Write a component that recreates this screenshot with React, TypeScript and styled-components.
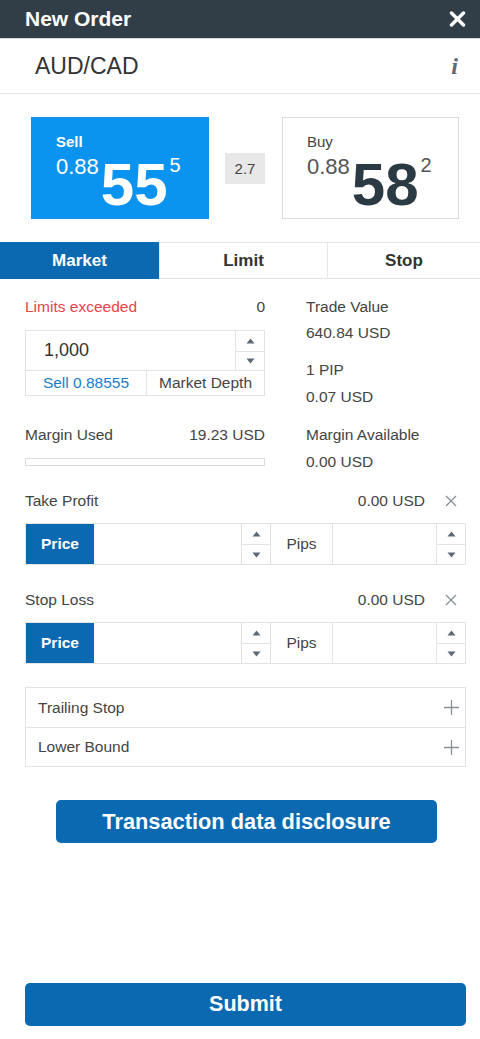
import React from "react";
import styled, { createGlobalStyle } from "styled-components";

const Global = createGlobalStyle`
  html, body { margin: 0; padding: 0; background: #fff; }
  body { font-family: "Liberation Sans", Arial, sans-serif; color: #444; }
  * { box-sizing: border-box; }
`;

const Page = styled.div`
  display: flex;
  flex-direction: column;
  min-height: 1039px;
  width: 480px;
`;

const Header = styled.div`
  height: 38px;
  background: #323e47;
  display: flex;
  align-items: center;
  justify-content: space-between;
  padding: 0 14px 0 25px;
  color: #fff;
  font-weight: bold;
  font-size: 21px;
`;

const SymbolRow = styled.div`
  height: 56px;
  display: flex;
  align-items: center;
  justify-content: space-between;
  padding: 0 20px 0 35px;
  border-bottom: 1px solid #e6e6e6;
  border-top: 1px solid #d7dadc;
`;

const Symbol = styled.div`
  font-size: 23px;
  color: #333;
  font-weight: 500;
`;

const Info = styled.span`
  font-family: "Liberation Serif", "DejaVu Serif", serif;
  font-style: italic;
  font-weight: bold;
  font-size: 24px;
  color: #5f6a74;
  padding-right: 2px;
`;

const Quotes = styled.div`
  display: flex;
  align-items: center;
  padding: 23px 0 0 31px;
`;

const QuoteBox = styled.div<{ $active?: boolean }>`
  width: ${(p) => (p.$active ? 178 : 177)}px;
  height: 102px;
  background: ${(p) => (p.$active ? "#0b93f0" : "#fff")};
  border: 1px solid ${(p) => (p.$active ? "#0b93f0" : "#dcdcdc")};
  color: ${(p) => (p.$active ? "#fff" : "#2c3a44")};
  padding: 16px 0 0 24px;
`;

const QuoteLabel = styled.div<{ $active?: boolean }>`
  font-size: 15px;
  line-height: 16px;
  color: ${(p) => (p.$active ? "#fff" : "#444")};
  font-weight: ${(p) => (p.$active ? "bold" : "normal")};
`;

const PriceRow = styled.div`
  display: flex;
  align-items: flex-start;
  margin-top: 6px;
`;

const PriceSmall = styled.span<{ $active?: boolean }>`
  font-size: 22px;
  line-height: 21px;
  color: ${(p) => (p.$active ? "#fff" : "#555")};
`;

const PriceBig = styled.span`
  font-size: 60px;
  line-height: 58px;
  font-weight: bold;
  margin: 0 2px 0 2px;
`;

const PriceSup = styled.span<{ $active?: boolean }>`
  font-size: 20px;
  line-height: 19px;
  color: ${(p) => (p.$active ? "#fff" : "#555")};
`;

const Spread = styled.div`
  width: 40px;
  height: 31px;
  margin: 0 17px 0 16px;
  background: #e8e8e8;
  display: flex;
  align-items: center;
  justify-content: center;
  font-size: 15px;
  color: #444;
`;

const Tabs = styled.div`
  display: grid;
  grid-template-columns: 159px 168px 1fr;
  margin-top: 23px;
  height: 37px;
  border-top: 1px solid #e6e6e6;
  border-bottom: 1px solid #e6e6e6;
`;

const Tab = styled.div<{ $active?: boolean }>`
  display: flex;
  align-items: center;
  justify-content: center;
  font-size: 17px;
  font-weight: bold;
  background: ${(p) => (p.$active ? "#0a69b0" : "#fff")};
  color: ${(p) => (p.$active ? "#fff" : "#333")};
  margin-top: ${(p) => (p.$active ? "-1px" : "0")};
  margin-bottom: ${(p) => (p.$active ? "-1px" : "0")};
  & + & {
    border-left: 1px solid #e6e6e6;
  }
`;

const Form = styled.div`
  padding: 15px 14px 0 25px;
  display: flex;
  flex-direction: column;
  font-size: 15.5px;
`;

const Columns = styled.div`
  display: grid;
  grid-template-columns: 240px 1fr;
  column-gap: 41px;
`;

const Col = styled.div`
  display: flex;
  flex-direction: column;
`;

const Line = styled.div<{ $mt?: number }>`
  height: 26px;
  display: flex;
  align-items: center;
  justify-content: space-between;
  color: #444;
  margin-top: ${(p) => p.$mt ?? 0}px;
`;

const Red = styled.span`
  color: #e8434a;
`;

const AmountBox = styled.div`
  margin-top: 10px;
  border: 1px solid #e3e3e3;
  display: grid;
  grid-template-columns: 1fr 29px;
  grid-template-rows: 39px 25px;
`;

const AmountValue = styled.div`
  display: flex;
  align-items: center;
  padding-left: 18px;
  font-size: 18px;
  color: #333;
`;

const Spinner = styled.div<{ $bl?: boolean }>`
  display: grid;
  grid-template-rows: 1fr 1fr;
  border-left: 1px solid #e3e3e3;
`;

const SpinBtn = styled.div`
  display: flex;
  align-items: center;
  justify-content: center;
  & + & {
    border-top: 1px solid #e3e3e3;
  }
`;

const SubRow = styled.div`
  grid-column: 1 / 3;
  display: grid;
  grid-template-columns: 120px 1fr;
  border-top: 1px solid #e3e3e3;
`;

const SubCell = styled.div<{ $blue?: boolean }>`
  display: flex;
  align-items: center;
  justify-content: center;
  color: ${(p) => (p.$blue ? "#1a7ccc" : "#444")};
  & + & {
    border-left: 1px solid #e3e3e3;
  }
`;

const Bar = styled.div`
  margin-top: 10px;
  height: 8px;
  border: 1px solid #dcdcdc;
`;

const SectionHead = styled.div<{ $mt: number }>`
  height: 26px;
  display: flex;
  align-items: center;
  color: #444;
  margin-top: ${(p) => p.$mt}px;
`;

const HeadLabel = styled.span`
  flex: 1;
`;

const HeadValue = styled.span`
  margin-right: 19px;
`;

const IconBtn = styled.span`
  display: flex;
  align-items: center;
  justify-content: center;
  width: 14px;
  margin-right: 8px;
`;

const PriceBox = styled.div<{ $mt: number }>`
  margin-top: ${(p) => p.$mt}px;
  height: 42px;
  border: 1px solid #e3e3e3;
  display: grid;
  grid-template-columns: 68px 1fr 29px 62px 104px 29px;
`;

const PriceTag = styled.div`
  background: #0a69b0;
  color: #fff;
  font-weight: bold;
  font-size: 15.5px;
  display: flex;
  align-items: center;
  justify-content: center;
`;

const Cell = styled.div<{ $bl?: boolean }>`
  display: flex;
  align-items: center;
  justify-content: center;
  color: #444;
  border-left: ${(p) => (p.$bl ? "1px solid #e3e3e3" : "none")};
`;

const Expanders = styled.div`
  margin-top: 23px;
  border: 1px solid #e3e3e3;
`;

const ExpRow = styled.div`
  height: 39px;
  display: flex;
  align-items: center;
  justify-content: space-between;
  padding: 0 6px 0 12px;
  color: #444;
  & + & {
    border-top: 1px solid #e3e3e3;
  }
`;

const Button = styled.button<{ $wide?: boolean }>`
  display: block;
  height: 43px;
  border: none;
  border-radius: 5px;
  background: #0a69b0;
  color: #fff;
  font-family: "Liberation Sans", Arial, sans-serif;
  font-weight: bold;
  font-size: ${(p) => (p.$wide ? 21.5 : 21.8)}px;
  width: ${(p) => (p.$wide ? "441px" : "381px")};
  margin: ${(p) => (p.$wide ? "0 0 13px 25px" : "33px 0 0 56px")};
`;

const Spacer = styled.div`
  flex: 1;
`;

const Up = () => (
  <svg width="9" height="6" viewBox="0 0 9 6">
    <path d="M4.5 0.5 L8.5 5.5 L0.5 5.5 Z" fill="#5b6976" />
  </svg>
);
const Down = () => (
  <svg width="9" height="6" viewBox="0 0 9 6">
    <path d="M0.5 0.5 L8.5 0.5 L4.5 5.5 Z" fill="#5b6976" />
  </svg>
);

const SpinCol = () => (
  <Spinner>
    <SpinBtn>
      <Up />
    </SpinBtn>
    <SpinBtn>
      <Down />
    </SpinBtn>
  </Spinner>
);

const CloseIcon = () => (
  <svg width="17" height="16" viewBox="0 0 17 16">
    <path d="M2.5 2 L14.5 14 M14.5 2 L2.5 14" stroke="#fff" strokeWidth="3.4" strokeLinecap="round" />
  </svg>
);

const SmallX = () => (
  <svg width="12" height="12" viewBox="0 0 12 12">
    <path d="M1 1 L11 11 M11 1 L1 11" stroke="#8a9096" strokeWidth="1.3" />
  </svg>
);

const Plus = () => (
  <svg width="15" height="15" viewBox="0 0 15 15">
    <path d="M7.5 0 V15 M0 7.5 H15" stroke="#8a9096" strokeWidth="1.3" />
  </svg>
);

const Quote = ({
  label,
  small,
  big,
  sup,
  active,
}: {
  label: string;
  small: string;
  big: string;
  sup: string;
  active?: boolean;
}) => (
  <QuoteBox $active={active}>
    <QuoteLabel $active={active}>{label}</QuoteLabel>
    <PriceRow>
      <PriceSmall $active={active}>{small}</PriceSmall>
      <PriceBig>{big}</PriceBig>
      <PriceSup $active={active}>{sup}</PriceSup>
    </PriceRow>
  </QuoteBox>
);

const PriceInputs = ({ mt }: { mt: number }) => (
  <PriceBox $mt={mt}>
    <PriceTag>Price</PriceTag>
    <Cell />
    <SpinCol />
    <Cell $bl>Pips</Cell>
    <Cell $bl />
    <SpinCol />
  </PriceBox>
);

export default function App() {
  return (
    <Page>
      <Global />
      <Header>
        <span>New Order</span>
        <CloseIcon />
      </Header>
      <SymbolRow>
        <Symbol>AUD/CAD</Symbol>
        <Info>i</Info>
      </SymbolRow>
      <Quotes>
        <Quote label="Sell" small="0.88" big="55" sup="5" active />
        <Spread>2.7</Spread>
        <Quote label="Buy" small="0.88" big="58" sup="2" />
      </Quotes>
      <Tabs>
        <Tab $active>Market</Tab>
        <Tab>Limit</Tab>
        <Tab>Stop</Tab>
      </Tabs>
      <Form>
        <Columns>
          <Col>
            <Line>
              <Red>Limits exceeded</Red>
              <span>0</span>
            </Line>
            <AmountBox>
              <AmountValue>1,000</AmountValue>
              <SpinCol />
              <SubRow>
                <SubCell $blue>Sell 0.88555</SubCell>
                <SubCell>Market Depth</SubCell>
              </SubRow>
            </AmountBox>
            <Line $mt={26}>
              <span>Margin Used</span>
              <span>19.23 USD</span>
            </Line>
            <Bar />
          </Col>
          <Col>
            <Line>Trade Value</Line>
            <Line>640.84 USD</Line>
            <Line $mt={11}>1 PIP</Line>
            <Line $mt={1}>0.07 USD</Line>
            <Line $mt={12}>Margin Available</Line>
            <Line $mt={1}>0.00 USD</Line>
          </Col>
        </Columns>
        <SectionHead $mt={13}>
          <HeadLabel>Take Profit</HeadLabel>
          <HeadValue>0.00 USD</HeadValue>
          <IconBtn>
            <SmallX />
          </IconBtn>
        </SectionHead>
        <PriceInputs mt={9} />
        <SectionHead $mt={22}>
          <HeadLabel>Stop Loss</HeadLabel>
          <HeadValue>0.00 USD</HeadValue>
          <IconBtn>
            <SmallX />
          </IconBtn>
        </SectionHead>
        <PriceInputs mt={9} />
        <Expanders>
          <ExpRow>
            <span>Trailing Stop</span>
            <Plus />
          </ExpRow>
          <ExpRow>
            <span>Lower Bound</span>
            <Plus />
          </ExpRow>
        </Expanders>
      </Form>
      <Button>Transaction data disclosure</Button>
      <Spacer />
      <Button $wide>Submit</Button>
    </Page>
  );
}
